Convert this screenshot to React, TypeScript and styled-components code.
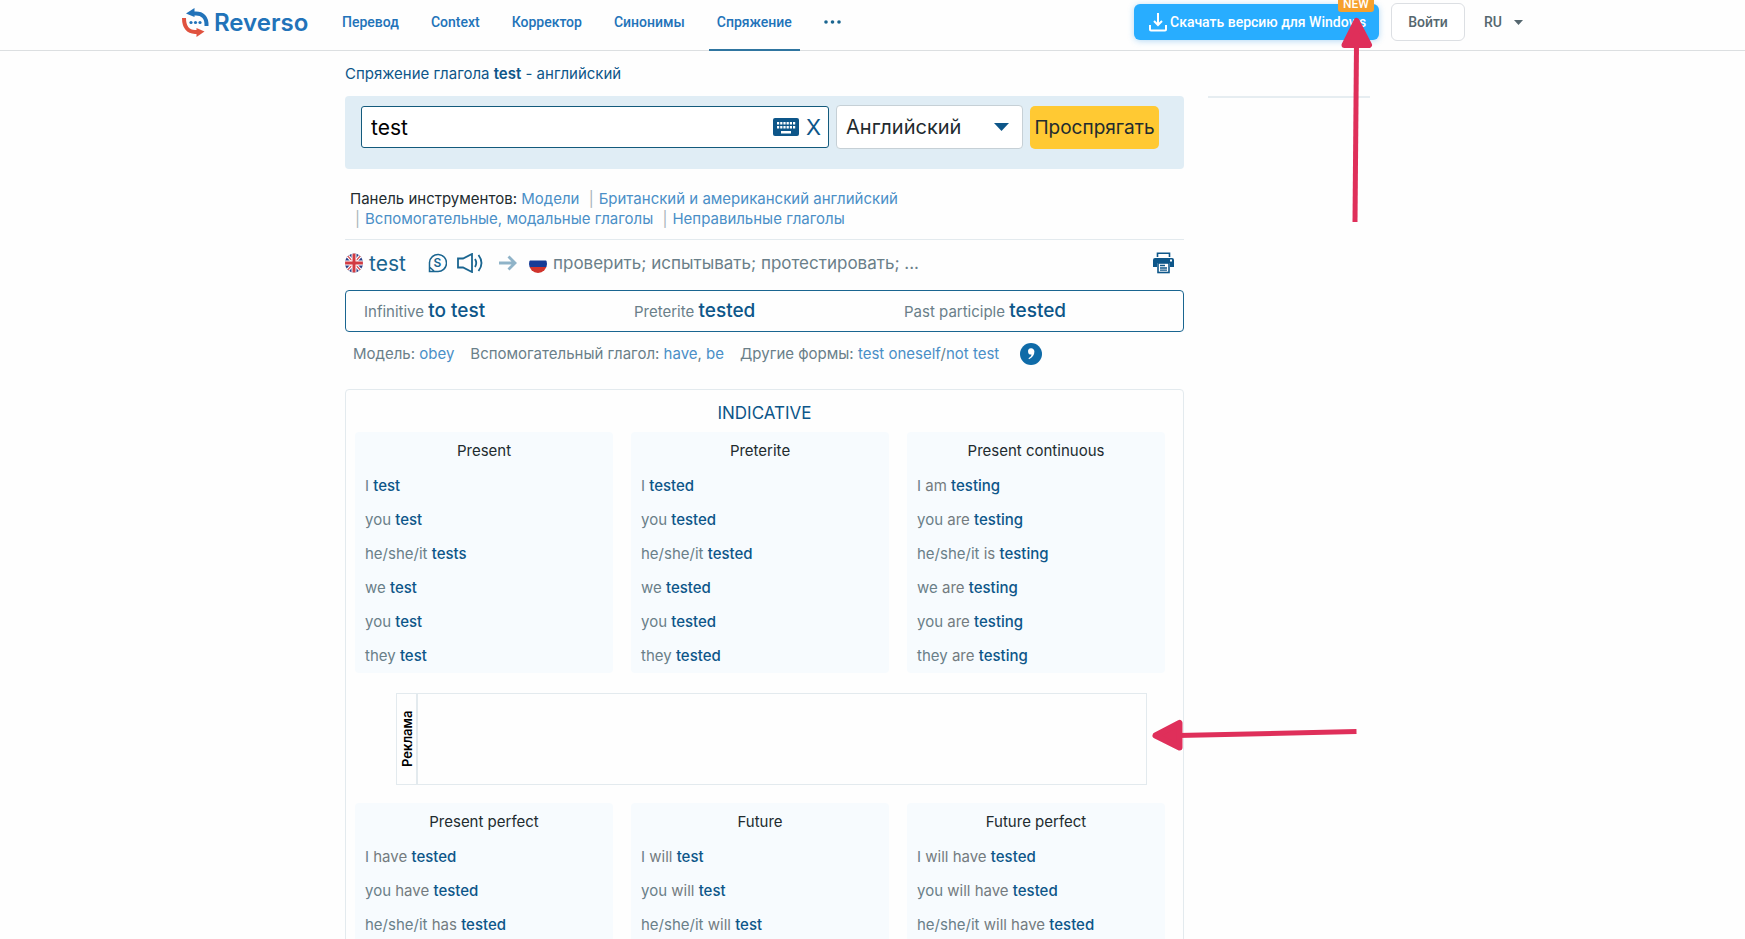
import React from "react";
import styled, { createGlobalStyle } from "styled-components";

const c = {
  blue: "#2273b9",
  deep: "#0d5689",
  teal: "#1a6590",
  link: "#4a8fc7",
  grey: "#6a7f89",
  aux: "#747b80",
  dark: "#222b2f",
  line: "#e3eaee",
  ink: "#55676f",
  red: "#df2f5a",
};

const Global = createGlobalStyle`
  *, *::before, *::after { box-sizing: border-box; }
  body { margin: 0; background: #fefefe; font-family: Inter, "Liberation Sans", sans-serif; color: ${c.dark}; }
  button, input, select { font-family: inherit; margin: 0; }
  a { text-decoration: none; color: inherit; }
  h1, h2, h3, p, ul { margin: 0; padding: 0; font-weight: inherit; }
  ul { list-style: none; }
  svg { display: block; flex: none; }
`;

const Page = styled.div`
  position: relative;
  height: 100vh;
  overflow: hidden;
`;

const Header = styled.header`
  height: 51px;
  border-bottom: 1px solid #dcdfe1;
  font-family: Roboto, "Liberation Sans", sans-serif;
  font-size: 14px;
  font-weight: 500;
`;

const HeaderInner = styled.div`
  display: flex;
  align-items: flex-start;
  max-width: 1381px;
  height: 51px;
  margin: 0 auto;
`;

const Logo = styled.a`
  display: flex;
  align-items: center;
  gap: 4px;
  height: 44px;
  width: 152px;
  color: ${c.blue};
  font-family: Inter, sans-serif;
  font-size: 24px;
  font-weight: 600;
`;

const Nav = styled.nav`
  display: flex;
  gap: 16px;
  flex: 1;
`;

const NavLink = styled.a<{ $active?: boolean }>`
  height: 51px;
  padding: 0 8px;
  line-height: 44px;
  color: ${c.blue};
  border-bottom: 2px solid ${(p) => (p.$active ? "#2f75a0" : "transparent")};
`;

const MoreButton = styled.button`
  display: flex;
  align-items: center;
  height: 44px;
  padding: 0 8px;
  border: 0;
  background: none;
`;

const HeaderActions = styled.div`
  display: flex;
  align-items: center;
  height: 44px;
  width: 429px;
`;

const DownloadButton = styled.button`
  position: relative;
  display: flex;
  align-items: center;
  gap: 3px;
  width: 245px;
  height: 36px;
  padding: 0 12px 0 15px;
  border: 0;
  border-radius: 6px;
  background: #28adff;
  box-shadow: 0 1px 6px rgba(40, 150, 230, 0.35);
  color: #fff;
  font: inherit;
  white-space: nowrap;
`;

const NewBadge = styled.span`
  position: absolute;
  top: -8px;
  right: 5px;
  width: 36px;
  height: 16px;
  border-radius: 3px;
  background: #f6a02d;
  font-size: 12px;
  line-height: 16px;
  text-align: center;
`;

const LoginButton = styled.button`
  width: 74px;
  height: 38px;
  margin-left: 12px;
  border: 1px solid #dcdfe3;
  border-radius: 6px;
  background: #fff;
  color: ${c.ink};
  font: inherit;
`;

const LangButton = styled.button`
  display: flex;
  align-items: center;
  gap: 12px;
  margin-left: 19px;
  padding: 0;
  border: 0;
  background: none;
  color: ${c.ink};
  font: inherit;
`;

const Body = styled.div`
  display: flex;
  gap: 24px;
  max-width: 1055px;
  margin: 0 auto;
`;

const Main = styled.main`
  flex: 0 1 839px;
  min-width: 0;
`;

const Aside = styled.aside`
  flex: 0 1 162px;
  margin-top: 45px;
  height: 2px;
  background: #e6edf1;
`;

const Title = styled.h1`
  height: 45px;
  line-height: 46px;
  font-size: 15px;
  font-weight: 400;
  color: ${c.deep};

  b {
    font-weight: 600;
  }
`;

const SearchPanel = styled.form`
  display: flex;
  gap: 7px;
  height: 73px;
  padding: 9px 25px 0 16px;
  border-radius: 4px;
  background: #e0edf5;
`;

const SearchField = styled.div`
  display: flex;
  align-items: center;
  gap: 7px;
  flex: 1;
  height: 42px;
  margin-top: 1px;
  padding: 0 7px 0 9px;
  border: 1px solid #135a7c;
  border-radius: 3px;
  background: #fff;
`;

const SearchInput = styled.input`
  flex: 1;
  min-width: 0;
  padding: 0;
  border: 0;
  outline: 0;
  background: none;
  color: #000;
  font-size: 21px;
`;

const IconButton = styled.button`
  padding: 0;
  border: 0;
  background: none;
  color: ${c.deep};
  font-size: 22px;
  line-height: 24px;
`;

const SelectWrap = styled.label`
  display: flex;
  align-items: center;
  width: 187px;
  height: 44px;
  padding-right: 13px;
  border: 1px solid #c6d0d6;
  border-radius: 4px;
  background: #fff;
`;

const Select = styled.select`
  appearance: none;
  flex: 1;
  min-width: 0;
  padding: 0 0 0 9px;
  border: 0;
  background: none;
  color: ${c.dark};
  font-size: 20px;
`;

const SubmitButton = styled.button`
  width: 129px;
  height: 43px;
  margin-top: 1px;
  padding: 0;
  border: 0;
  border-radius: 5px;
  background: #ffc933;
  color: ${c.dark};
  font-size: 19px;
  white-space: nowrap;
`;

const Toolbar = styled.div`
  margin-top: 20px;
  padding: 0 5px 10px;
  border-bottom: 1px solid ${c.line};
  font-size: 15px;
  line-height: 20px;
`;

const ToolLink = styled.a`
  color: ${c.link};
`;

const Bar = styled.span`
  margin: 0 5px;
  color: #a9b4ba;
`;

const VerbRow = styled.div`
  display: flex;
  align-items: center;
  height: 46px;
  padding-right: 10px;
`;

const Verb = styled.h2`
  width: 59px;
  margin-left: 6px;
  font-size: 21px;
  font-weight: 400;
  color: ${c.teal};
`;

const Translation = styled.p`
  flex: 1;
  margin-left: 6px;
  font-size: 17px;
  color: ${c.grey};
`;

const Gap = styled.span<{ $w: number }>`
  flex: none;
  width: ${(p) => p.$w}px;
`;

const Forms = styled.div`
  display: grid;
  grid-template-columns: repeat(3, 270px);
  margin-top: 4px;
  padding-left: 18px;
  height: 42px;
  border: 1px solid ${c.teal};
  border-radius: 4px;
  line-height: 40px;
  font-size: 15px;
  color: ${c.grey};
`;

const FormValue = styled.strong`
  font-size: 19px;
  font-weight: 500;
  color: ${c.deep};
`;

const Meta = styled.div`
  display: flex;
  align-items: center;
  gap: 16px;
  height: 43px;
  padding-left: 8px;
  font-size: 15px;
  color: ${c.grey};

  svg {
    margin-left: 5px;
  }
`;

const Card = styled.section`
  margin-top: 14px;
  padding: 12px 18px 0 9px;
  border: 1px solid ${c.line};
  border-radius: 4px;
`;

const Mood = styled.h2`
  height: 30px;
  line-height: 23px;
  padding-left: 9px;
  text-align: center;
  font-size: 17px;
  font-weight: 400;
  color: ${c.deep};
`;

const Tenses = styled.div`
  display: grid;
  grid-template-columns: repeat(3, 1fr);
  gap: 18px;
`;

const Tense = styled.section`
  padding: 0 10px;
  border-radius: 4px;
  background: #f7fbfe;
  font-size: 15px;
`;

const TenseTitle = styled.h3`
  height: 37px;
  line-height: 38px;
  text-align: center;
  font-size: 15px;
  font-weight: 400;
`;

const TenseRow = styled.li`
  height: 34px;
  line-height: 34px;
  color: ${c.grey};
`;

const Aux = styled.span`
  color: ${c.aux};
`;

const VerbForm = styled.span`
  font-weight: 500;
  color: ${c.deep};
`;

const Ad = styled.div`
  display: flex;
  height: 92px;
  margin: 20px 18px 18px 41px;
  border: 1px solid ${c.line};
`;

const AdLabel = styled.span`
  display: flex;
  align-items: center;
  justify-content: center;
  width: 21px;
  border-left: 2px solid ${c.line};
  writing-mode: vertical-rl;
  transform: rotate(180deg);
  color: #000;
  font-size: 13px;
  font-weight: 600;
`;

const UpArrow = styled.svg`
  position: absolute;
  top: 16px;
  left: calc(50% + 466px);
`;

const LeftArrow = styled.svg`
  position: absolute;
  top: 718px;
  left: calc(50% + 277px);
`;

type Row = [string, string, string];

const rows = (subjects: string[], make: (s: string) => [string, string]): Row[] =>
  subjects.map((s) => [s, ...make(s)]);

const people = ["I", "you", "he/she/it", "we", "you", "they"];
const singular = people.slice(0, 3);

const firstTenses = [
  { name: "Present", rows: rows(people, (s) => ["", s === "he/she/it" ? "tests" : "test"]) },
  { name: "Preterite", rows: rows(people, () => ["", "tested"]) },
  {
    name: "Present continuous",
    rows: rows(people, (s) => [s === "I" ? "am" : s === "he/she/it" ? "is" : "are", "testing"]),
  },
];

const secondTenses = [
  { name: "Present perfect", rows: rows(singular, (s) => [s === "he/she/it" ? "has" : "have", "tested"]) },
  { name: "Future", rows: rows(singular, () => ["will", "test"]) },
  { name: "Future perfect", rows: rows(singular, () => ["will have", "tested"]) },
];

function TenseGrid({ tenses }: { tenses: { name: string; rows: Row[] }[] }) {
  return (
    <Tenses>
      {tenses.map((t) => (
        <Tense key={t.name}>
          <TenseTitle>{t.name}</TenseTitle>
          <ul>
            {t.rows.map(([subject, aux, form], i) => (
              <TenseRow key={i}>
                {subject} {aux && <Aux>{aux} </Aux>}
                <VerbForm>{form}</VerbForm>
              </TenseRow>
            ))}
          </ul>
        </Tense>
      ))}
    </Tenses>
  );
}

const LogoMark = () => (
  <svg width="28" height="29" viewBox="0 0 28 29" fill="none">
    <path d="M10 5.5H14C20 5.5 25 9 24.500 18" stroke={c.blue} strokeWidth="4" />
    <path d="M4 5.500L12.500 0V9Z" fill={c.blue} />
    <path d="M2 10C2 19 6 24 13 24H17" stroke="#e0523f" strokeWidth="4" />
    <path d="M22.500 23.500L14.500 29V20Z" fill="#e0523f" />
    <circle cx="9" cy="14.500" r="1.600" fill={c.blue} />
    <circle cx="13.500" cy="14.500" r="1.600" fill={c.blue} />
    <circle cx="18" cy="14.500" r="1.600" fill={c.blue} />
  </svg>
);

const DownloadIcon = () => (
  <svg width="18" height="20" viewBox="0 0 18 20" fill="none" stroke="#fff" strokeWidth="2">
    <path d="M9 1V13M5 9L9 13L13 9" />
    <path d="M1 13V17.500Q1 18.500 2 18.500H16Q17 18.500 17 17.500V13" />
  </svg>
);

const KeyboardIcon = () => (
  <svg width="26" height="18" viewBox="0 0 26 18">
    <rect width="26" height="18" rx="2" fill={c.deep} />
    {[4, 7.2, 10.4, 13.6, 16.8, 20].map((x) => (
      <React.Fragment key={x}>
        <rect x={x} y="4" width="2.200" height="2.500" fill="#fff" />
        <rect x={x} y="8" width="2.200" height="2.500" fill="#fff" />
      </React.Fragment>
    ))}
    <rect x="8" y="13" width="10" height="2.500" fill="#fff" />
  </svg>
);

const UkFlag = () => (
  <svg width="18" height="20" viewBox="0 0 18 20">
    <clipPath id="uk">
      <ellipse cx="9" cy="10" rx="9" ry="9.500" />
    </clipPath>
    <g clipPath="url(#uk)">
      <rect width="18" height="20" fill="#2b3f86" />
      <path d="M0 0L18 20M18 0L0 20" stroke="#fff" strokeWidth="3.500" />
      <path d="M0 0L18 20M18 0L0 20" stroke="#d8494f" strokeWidth="1.200" />
      <path d="M9 0V20M0 10H18" stroke="#fff" strokeWidth="5" />
      <path d="M9 0V20M0 10H18" stroke="#d23b42" strokeWidth="3" />
    </g>
  </svg>
);

const RuFlag = () => (
  <svg width="18" height="20" viewBox="0 0 18 20">
    <clipPath id="ru">
      <circle cx="9" cy="11" r="9" />
    </clipPath>
    <g clipPath="url(#ru)">
      <rect y="7.500" width="18" height="6.500" fill="#173c96" />
      <rect y="14" width="18" height="6" fill="#d0342c" />
    </g>
  </svg>
);

const SlowIcon = () => (
  <svg width="19" height="20" viewBox="0 0 19 20" fill="none" stroke={c.teal} strokeWidth="1.500">
    <path d="M1.500 18.500V9.500A8.500 8.500 0 1 1 9.500 18.500ZM1.500 14L6 18" />
    <text x="9.500" y="14" textAnchor="middle" fontSize="12" fontWeight="600" fill={c.teal} stroke="none">
      S
    </text>
  </svg>
);

const SpeakerIcon = () => (
  <svg width="27" height="20" viewBox="0 0 27 20" fill="none" stroke={c.teal} strokeWidth="1.800">
    <path d="M1 5.500H6L15 1V19L6 14.500H1Z" />
    <path d="M18 6Q20.500 10 18 14M21.500 2Q27.500 10 21.500 18" />
  </svg>
);

const ArrowIcon = () => (
  <svg width="18" height="16" viewBox="0 0 18 16" fill="none" stroke="#8fb3c8" strokeWidth="2.800">
    <path d="M0 8H16M9.500 1.500L16 8L9.500 14.500" />
  </svg>
);

const PrinterIcon = () => (
  <svg width="21" height="22" viewBox="0 0 21 22">
    <path d="M4.500 5V1.200H16.500V5" fill="none" stroke={c.deep} strokeWidth="1.600" />
    <path d="M2 6H19Q21 6 21 8V15H17V11H4V15H0V8Q0 6 2 6Z" fill={c.deep} />
    <rect x="17" y="7.500" width="2" height="2" fill="#fff" />
    <rect x="5" y="11" width="11" height="9.500" fill="#fff" stroke={c.deep} strokeWidth="1.600" />
    <path d="M7 13.500H12M7 16H14M7 18.200H14" stroke={c.deep} strokeWidth="1.300" />
  </svg>
);

const CommaBadge = () => (
  <svg width="22" height="22" viewBox="0 0 22 22">
    <circle cx="11" cy="11" r="11" fill="#0f6ba8" />
    <path
      d="M11 5.200A3.200 3.200 0 0 1 14.400 8.600C14.400 12 12.500 14.800 9 16.200L8.500 15.200C10.500 14.200 11.400 13 11.500 11.600A3.200 3.200 0 1 1 11 5.200Z"
      fill="#fff"
    />
  </svg>
);

export default function App() {
  return (
    <Page>
      <Global />
      <Header>
        <HeaderInner>
          <Logo href="#">
            <LogoMark />
            Reverso
          </Logo>
          <Nav>
            <NavLink href="#">Перевод</NavLink>
            <NavLink href="#">Context</NavLink>
            <NavLink href="#">Корректор</NavLink>
            <NavLink href="#">Синонимы</NavLink>
            <NavLink href="#" $active>
              Спряжение
            </NavLink>
            <MoreButton type="button" aria-label="Ещё">
              <svg width="17" height="4" viewBox="0 0 17 4" fill={c.teal}>
                <circle cx="2" cy="2" r="1.800" />
                <circle cx="8.500" cy="2" r="1.800" />
                <circle cx="15" cy="2" r="1.800" />
              </svg>
            </MoreButton>
          </Nav>
          <HeaderActions>
            <DownloadButton type="button">
              <DownloadIcon />
              Скачать версию для Windows
              <NewBadge>NEW</NewBadge>
            </DownloadButton>
            <LoginButton type="button">Войти</LoginButton>
            <LangButton type="button">
              RU
              <svg width="9" height="5" viewBox="0 0 9 5" fill={c.ink}>
                <path d="M0 0H9L4.500 5Z" />
              </svg>
            </LangButton>
          </HeaderActions>
        </HeaderInner>
      </Header>

      <Body>
        <Main>
          <Title>
            Спряжение глагола <b>test</b> - английский
          </Title>
          <SearchPanel>
            <SearchField>
              <SearchInput aria-label="Глагол" defaultValue="test" />
              <IconButton type="button" aria-label="Клавиатура">
                <KeyboardIcon />
              </IconButton>
              <IconButton type="button">X</IconButton>
            </SearchField>
            <SelectWrap>
              <Select aria-label="Язык">
                <option>Английский</option>
              </Select>
              <svg width="15" height="8" viewBox="0 0 15 8" fill={c.deep}>
                <path d="M0 0H15L7.500 8Z" />
              </svg>
            </SelectWrap>
            <SubmitButton type="button">Проспрягать</SubmitButton>
          </SearchPanel>

          <Toolbar>
            <div>
              Панель инструментов: <ToolLink href="#">Модели</ToolLink> <Bar>|</Bar>
              <ToolLink href="#">Британский и американский английский</ToolLink>
            </div>
            <div>
              <Bar>|</Bar>
              <ToolLink href="#">Вспомогательные, модальные глаголы</ToolLink> <Bar>|</Bar>
              <ToolLink href="#">Неправильные глаголы</ToolLink>
            </div>
          </Toolbar>

          <VerbRow>
            <UkFlag />
            <Verb>test</Verb>
            <IconButton type="button" aria-label="Медленно">
              <SlowIcon />
            </IconButton>
            <Gap $w={10} />
            <IconButton type="button" aria-label="Прослушать">
              <SpeakerIcon />
            </IconButton>
            <Gap $w={15} />
            <ArrowIcon />
            <Gap $w={12} />
            <RuFlag />
            <Translation>проверить; испытывать; протестировать; ...</Translation>
            <IconButton type="button" aria-label="Печать">
              <PrinterIcon />
            </IconButton>
          </VerbRow>

          <Forms>
            <span>
              Infinitive <FormValue>to test</FormValue>
            </span>
            <span>
              Preterite <FormValue>tested</FormValue>
            </span>
            <span>
              Past participle <FormValue>tested</FormValue>
            </span>
          </Forms>

          <Meta>
            <span>
              Модель: <ToolLink href="#">obey</ToolLink>
            </span>
            <span>
              Вспомогательный глагол: <ToolLink href="#">have</ToolLink>, <ToolLink href="#">be</ToolLink>
            </span>
            <span>
              Другие формы: <ToolLink href="#">test oneself</ToolLink>/<ToolLink href="#">not test</ToolLink>
            </span>
            <CommaBadge />
          </Meta>

          <Card>
            <Mood>INDICATIVE</Mood>
            <TenseGrid tenses={firstTenses} />
            <Ad>
              <AdLabel>Реклама</AdLabel>
            </Ad>
            <TenseGrid tenses={secondTenses} />
          </Card>
        </Main>
        <Aside />
      </Body>

      <UpArrow width="36" height="208" viewBox="0 0 36 208">
        <path d="M17.500 28L16 206" stroke={c.red} strokeWidth="5" />
        <path d="M17.500 5L30 29H5.500Z" fill={c.red} stroke={c.red} strokeWidth="6" strokeLinejoin="round" />
      </UpArrow>
      <LeftArrow width="208" height="36" viewBox="0 0 208 36">
        <path d="M28 17.500L206.500 13.500" stroke={c.red} strokeWidth="5" />
        <path d="M5.500 17.500L29.500 5V29.500Z" fill={c.red} stroke={c.red} strokeWidth="6" strokeLinejoin="round" />
      </LeftArrow>
    </Page>
  );
}
